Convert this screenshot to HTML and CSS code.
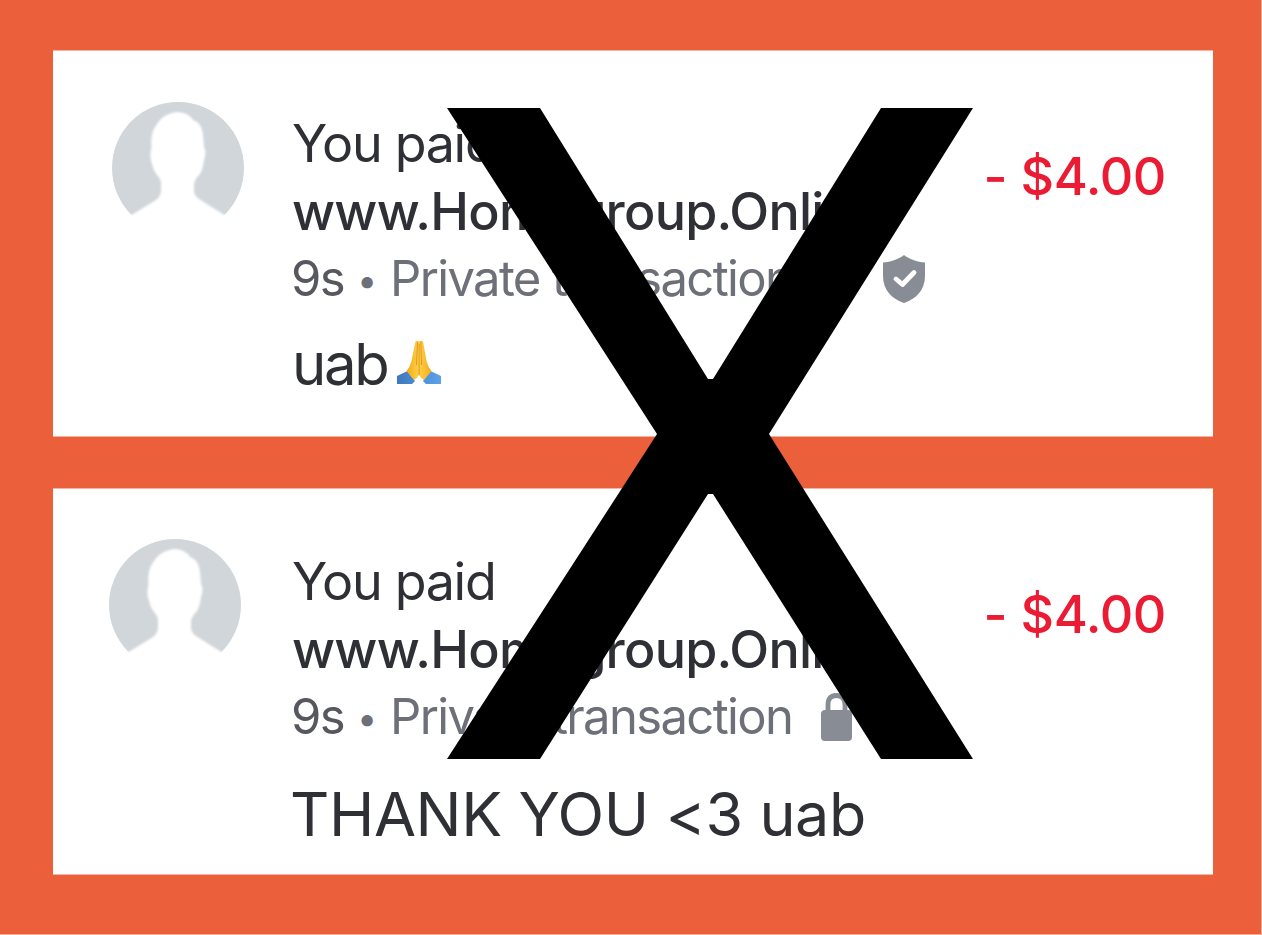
FILE: index.html
```html
<!DOCTYPE html>
<html lang="en">
<head>
<meta charset="utf-8">
<title>Payments</title>
<link rel="stylesheet" href="styles.css">
</head>
<body>
<svg class="defs" width="0" height="0" aria-hidden="true">
  <defs>
    <filter id="soft" x="-10%" y="-10%" width="120%" height="120%"><feGaussianBlur stdDeviation="1"/></filter>
    <linearGradient id="hand" x1="0" x2="1"><stop offset="0" stop-color="#f3a915"/><stop offset=".5" stop-color="#ffd04a"/><stop offset="1" stop-color="#f4ab18"/></linearGradient>
    <linearGradient id="cuff" x1="0" x2="1"><stop offset="0" stop-color="#3f78bd"/><stop offset="1" stop-color="#5aa2ea"/></linearGradient>
    <g id="person">
      <circle cx="66" cy="66" r="66" fill="#d1d6da"/>
      <path filter="url(#soft)" fill="#fff" d="M65 10C73 10 79 14 81 18C88 20 91 27 91.500 38L92 45Q95 50 92 58Q91 67 88 72Q83 77 82 82V88Q82 94 87 97L114 114L140 116V145H-8V116L18 114L44 98Q49 94 49 88V82Q49 77 45 73Q41 68 40 62Q37 54 39.500 46C38.500 34 41 27 45 22C50 14 57 11 65 10Z"/>
    </g>
  </defs>
</svg>
<main class="board">
  <article class="card">
    <svg class="avatar" viewBox="0 0 132 132"><use href="#person"/></svg>
    <div class="details">
      <div class="line verb">You paid</div>
      <div class="line payee">www.Homegroup.Online</div>
      <div class="line meta"><span class="age">9s</span><span class="dot">•</span><span class="privacy">Private transaction</span>
        <svg class="shield" width="42" height="48" viewBox="0 0 42 48"><path fill="#888c95" d="M21 0C26 4 34 7 42 7.500V21C42 35 33 44 21 48C9 44 0 35 0 21V7.500C8 7 16 4 21 0Z"/><path d="M13 24L19.500 29.500L31 17.500" fill="none" stroke="#fff" stroke-width="4.800" stroke-linecap="round" stroke-linejoin="round"/></svg>
      </div>
      <div class="note"><span class="note-text">uab</span>
        <svg class="pray" width="44" height="44" viewBox="0 0 44 44"><path fill="url(#cuff)" d="M0 36L10.500 31L18 41L15 44H0ZM44 36L33.500 31L26 41L29 44H44Z"/><path fill="url(#hand)" d="M18.500 1.500Q20 0 22 1.300Q24 0 26 1.500L29.500 21Q31 27 34.500 31L27 40Q24 38.500 22 35Q20 38.500 17 40L9.500 31Q13 27 14.500 21Z"/><path d="M20.500 2L19.500 25M23.800 2L24.600 25M22.100 4V35" stroke="#d98b13" stroke-width=".8" fill="none"/></svg>
      </div>
    </div>
    <div class="amount">- $4.00</div>
  </article>
  <article class="card card-late">
    <svg class="avatar" viewBox="0 0 132 132"><use href="#person"/></svg>
    <div class="details">
      <div class="line verb">You paid</div>
      <div class="line payee">www.Homegroup.Online</div>
      <div class="line meta"><span class="age">9s</span><span class="dot">•</span><span class="privacy">Private transaction</span>
        <svg class="lock" width="31" height="48" viewBox="0 0 31 48"><rect y="17" width="31" height="31" rx="4" fill="#888c95"/><path d="M7 20V12Q7 2.500 15.500 2.500T24 12V20" fill="none" stroke="#888c95" stroke-width="4.800"/></svg>
      </div>
      <div class="note note-long">THANK YOU &lt;3 uab</div>
    </div>
    <div class="amount">- $4.00</div>
  </article>
  <!-- Rejection mark laid over both payments -->
  <svg class="cross" viewBox="0 0 526 651"><path d="M0 0H93L261 271H266L434 0H526L322 326L526 651H434L266 386H261L93 651H0L210 326Z"/></svg>
</main>
</body>
</html>
```
FILE: styles.css
```css
body {
  margin: 0;
  background: #f7ae9b;
  font-family: Inter, "Liberation Sans", sans-serif;
  color: #2f3035;
}
.defs { position: absolute; }
.board {
  position: relative;
  box-sizing: border-box;
  width: 1261px;
  height: 934px;
  padding: 50px 48px 0 53px;
  background: #ec5f3b;
  display: flex;
  flex-direction: column;
  gap: 51px;
  overflow: hidden;
}
.card {
  box-sizing: border-box;
  height: 387px;
  flex: none;
  background: #fff;
  border-top: 1px solid #f7b3a1;
  border-bottom: 1px solid #f7b3a1;
  padding: 58px 47px 0 59px;
  display: grid;
  grid-template-columns: 132px 1fr auto;
  column-gap: 48px;
  align-items: start;
  white-space: nowrap;
}
.avatar { width: 132px; height: 132px; margin-top: -7px; }
.card-late .avatar { margin: -8px 0 0 -3px; }
.details { width: 640px; }
.line { height: 68px; line-height: 69px; font-size: 52px; }
.verb { letter-spacing: -1.3px; }
.payee { font-weight: 500; letter-spacing: -0.75px; line-height: 70px; }
.meta { display: flex; color: #6d6f79; font-size: 49px; line-height: 68px; letter-spacing: -1.65px; }
.age { color: #56575f; width: 66px; margin-left: -1px; }
.dot { width: 33px; font-size: 36px; line-height: 71px; }
.privacy { width: 493px; flex: none; }
.shield { flex: none; margin-top: 10px; }
.card-late .privacy { width: 431px; }
.lock { flex: none; margin-top: 10px; }
.note { display: flex; height: 90px; line-height: 103px; font-size: 58px; }
.note-text { width: 105px; letter-spacing: -2.3px; }
.pray { margin-top: 27px; }
.note-long { font-size: 61px; line-height: 126px; letter-spacing: -0.4px; margin-left: -2px; }
.amount {
  margin-top: 34px;
  line-height: 68px;
  font-size: 52px;
  font-weight: 500;
  letter-spacing: -0.4px;
  color: #ea1b33;
}
.cross {
  position: absolute;
  left: 447px;
  top: 108.200px;
  width: 526px;
  height: 651px;
}
```
